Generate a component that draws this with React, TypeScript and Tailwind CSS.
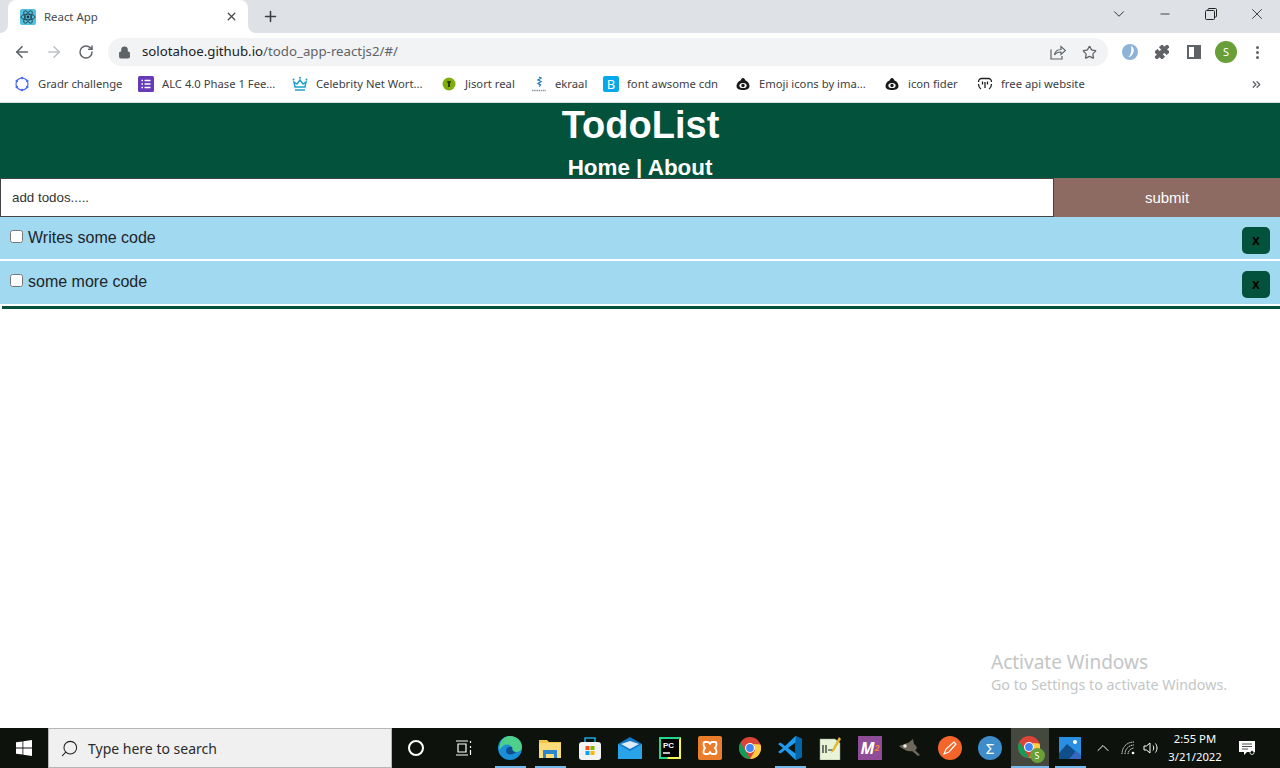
import React from 'react';
import { ArrowLeft, ArrowRight, RotateCw, Lock, Star, Puzzle, Plus, X, ChevronDown, Minus, Search, ChevronUp, ChevronsRight } from 'lucide-react';

const uiFont = { fontFamily: '"Noto Sans", "Open Sans", sans-serif' };

function ReactLogo() {
  return (
    <svg width="16" height="16" viewBox="0 0 16 16">
      <rect width="16" height="16" rx="2" fill="#53c1de" />
      <g fill="none" stroke="#1d3a44" strokeWidth="0.8">
        <ellipse cx="8" cy="8" rx="7" ry="2.8" />
        <ellipse cx="8" cy="8" rx="7" ry="2.8" transform="rotate(60 8 8)" />
        <ellipse cx="8" cy="8" rx="7" ry="2.8" transform="rotate(120 8 8)" />
      </g>
      <circle cx="8" cy="8" r="1.4" fill="#1d3a44" />
    </svg>
  );
}

function ShareIcon() {
  return (
    <svg width="16" height="16" viewBox="0 0 16 16" fill="none" stroke="#5f6368" strokeWidth="1.2">
      <path d="M1 5.5v9.5h11v-3" />
      <path d="M4.5 11c.5-3.5 3-5.5 6.5-5.5V2.500l4.500 4-4.500 4V8c-3 0-5 .8-6.500 3z" />
    </svg>
  );
}

function Bookmark({ icon, label, className }: { icon: React.ReactNode; label: string; className: string }) {
  return (
    <div className={`flex items-center ${className}`}>
      <div className="w-4 h-4 flex items-center justify-center shrink-0">{icon}</div>
      <span className="ml-2 text-[11.25px] text-[#3c4043] whitespace-nowrap">{label}</span>
    </div>
  );
}

function EyeLogo() {
  return (
    <svg width="14" height="14" viewBox="0 0 14 14">
      <path d="M7 1c1.500 0 2 1.500 2.500 2.500 2 .5 4 3 4 5.500 0 3-3 4-6.500 4S.5 12 .5 9c0-2.500 2-5 4-5.500C5 2.500 5.500 1 7 1z" fill="#1a1a1a" />
      <ellipse cx="7" cy="8.500" rx="3.600" ry="2.600" fill="#fff" />
      <circle cx="7" cy="8.500" r="1.700" fill="#1a1a1a" />
    </svg>
  );
}

function BrowserChrome() {
  return (
    <div style={uiFont} className="shrink-0">
      <div className="h-[33px] bg-[#dee1e6] flex items-end pl-2">
        <div className="relative w-[240px] h-[33px] bg-white rounded-t-lg flex items-center pl-3 pr-2">
          <div className="absolute bottom-0 -left-2 w-2 h-2 bg-white">
            <div className="w-full h-full bg-[#dee1e6] rounded-br-lg" />
          </div>
          <div className="absolute bottom-0 -right-2 w-2 h-2 bg-white">
            <div className="w-full h-full bg-[#dee1e6] rounded-bl-lg" />
          </div>
          <ReactLogo />
          <span className="ml-2 text-[11.4px] text-[#45494d]">React App</span>
          <X size={13} strokeWidth={2.4} className="ml-auto mr-[2px] text-[#45494d]" />
        </div>
        <div className="w-[44px] h-[33px] flex items-center justify-center">
          <Plus size={17} strokeWidth={2.2} className="text-[#3c4043]" />
        </div>
        <div className="ml-auto h-[33px] flex items-center text-[#222] pb-[5px]">
          <ChevronDown size={18} strokeWidth={1.2} className="mr-[30px]" />
          <Minus size={14} strokeWidth={1.4} className="mr-[33px]" />
          <svg width="12" height="12" viewBox="0 0 12 12" fill="none" stroke="#222" strokeWidth="1" className="mr-[31px]">
            <rect x="0.500" y="2.500" width="9" height="9" rx="1" fill="#dee1e6" />
            <path d="M3 2.500V1.500a1 1 0 0 1 1-1h6.500a1 1 0 0 1 1 1V8a1 1 0 0 1-1 1H9.500" />
          </svg>
          <X size={18} strokeWidth={1.1} className="mr-[14px]" />
        </div>
      </div>

      <div className="h-[33px] bg-white flex items-center pt-[5px]">
        <ArrowLeft size={18} strokeWidth={2.2} className="ml-[13px] text-[#5f6368]" />
        <ArrowRight size={18} strokeWidth={2.2} className="ml-[14px] text-[#bdc1c6]" />
        <RotateCw size={16} strokeWidth={2.2} className="ml-[15px] text-[#5f6368]" />
        <div className="ml-[14px] w-[1000px] h-[28px] rounded-full bg-[#f1f3f4] flex items-center pl-[10px] pr-[10px]">
          <Lock size={13} fill="#5f6368" strokeWidth={2} className="text-[#5f6368]" />
          <span className="ml-[11px] text-[13.25px] text-[#202124]">
            solotahoe.github.io<span className="text-[#5f6368]">/todo_app-reactjs2/#/</span>
          </span>
          <div className="ml-auto flex items-center gap-[16px]">
            <ShareIcon />
            <Star size={15} strokeWidth={2} className="text-[#5f6368] mr-[1px]" />
          </div>
        </div>
        <div className="flex items-center ml-[13px]">
          <svg width="18" height="18" viewBox="0 0 18 18">
            <circle cx="9" cy="9" r="8" fill="#8fb2d9" />
            <path d="M10 3c3 1 4 5 1 9-1 1.500-2.500 2-3.500 2 2-2 3.500-6 2.500-11z" fill="#fff" />
          </svg>
          <Puzzle size={16} fill="#5f6368" strokeWidth={1.5} className="ml-[15px] text-[#5f6368]" />
          <div className="ml-[17px] w-[14px] h-[14px] border-2 border-[#5f6368] flex justify-end">
            <div className="w-[5px] bg-[#5f6368]" />
          </div>
          <div className="ml-[14px] w-[22px] h-[22px] rounded-full bg-[#689f38] text-white text-[11px] flex items-center justify-center">S</div>
          <div className="ml-[19px] flex flex-col gap-[2px]">
            <div className="w-[3px] h-[3px] rounded-full bg-[#5f6368]" />
            <div className="w-[3px] h-[3px] rounded-full bg-[#5f6368]" />
            <div className="w-[3px] h-[3px] rounded-full bg-[#5f6368]" />
          </div>
        </div>
      </div>

      <div className="h-[37px] bg-white border-b border-[#dadce0] flex items-center">
        <Bookmark className="ml-[14px] w-[124px]" label="Gradr challenge" icon={
          <svg width="16" height="16" viewBox="0 0 16 16" fill="#4a6cf0">
            <circle cx="8" cy="8" r="6" fill="none" stroke="#4a6cf0" strokeWidth="1.2" />
            <circle cx="8" cy="2" r="1.300" />
            <circle cx="13.200" cy="5" r="1.300" />
            <circle cx="13.200" cy="11" r="1.300" />
            <circle cx="8" cy="14" r="1.300" />
            <circle cx="2.800" cy="11" r="1.300" />
            <circle cx="2.800" cy="5" r="1.300" />
          </svg>
        } />
        <Bookmark className="w-[154px]" label="ALC 4.0 Phase 1 Fee..." icon={
          <svg width="16" height="16" viewBox="0 0 16 16">
            <rect width="16" height="16" rx="1.500" fill="#673ab7" />
            <path d="M3.500 4.500h1.500M6.500 4.500h6M3.500 8h1.500M6.500 8h6M3.500 11.500h1.500M6.500 11.500h6" stroke="#fff" strokeWidth="1.300" />
          </svg>
        } />
        <Bookmark className="w-[149px]" label="Celebrity Net Wort..." icon={
          <svg width="16" height="16" viewBox="0 0 16 16" fill="none" stroke="#1f9ec9" strokeWidth="1.500">
            <path d="M2 6l3 2 3-4 3 4 3-2-1 5H3z" />
            <path d="M3 14h10" />
            <circle cx="8" cy="1.800" r="1" fill="#1f9ec9" stroke="none" />
            <circle cx="1.500" cy="3.500" r="1" fill="#1f9ec9" stroke="none" />
            <circle cx="14.500" cy="3.500" r="1" fill="#1f9ec9" stroke="none" />
          </svg>
        } />
        <Bookmark className="w-[90px]" label="Jisort real" icon={
          <svg width="16" height="16" viewBox="0 0 16 16"><circle cx="8" cy="8" r="6.500" fill="#7fae0a" /><path d="M6 5h4L9 8v3H7V8z" fill="#2a3b05" /></svg>
        } />
        <Bookmark className="w-[72px]" label="ekraal" icon={
          <svg width="16" height="16" viewBox="0 0 16 16">
            <path d="M8 1l2 1-3 2 3 1.500-3 2 2.500 1.500-1.500 1.500" fill="none" stroke="#1f78b4" strokeWidth="1.300" />
            <path d="M1 14.500h14" stroke="#8a97a8" strokeWidth="1.300" strokeDasharray="1.500 0.700" />
          </svg>
        } />
        <Bookmark className="w-[132px]" label="font awsome cdn" icon={
          <div className="w-4 h-4 rounded-[2px] bg-[#03a9e8] text-white text-[13px] leading-4 text-center">B</div>
        } />
        <Bookmark className="w-[149px]" label="Emoji icons by ima..." icon={<EyeLogo />} />
        <Bookmark className="w-[93px]" label="icon fider" icon={<EyeLogo />} />
        <Bookmark className="w-[273px]" label="free api website" icon={
          <svg width="16" height="16" viewBox="0 0 16 16" fill="none" stroke="#222" strokeWidth="1.300">
            <path d="M1.500 6c0-2 1.500-3.500 3-3.500h7c1.500 0 3 1.500 3 3.500M4 13c-1.500-1-2.500-3-2.500-5M12 13c1.500-1 2.500-3 2.500-5" />
            <path d="M5.500 5.500v3M10.500 5.500v3M8 6v6" />
          </svg>
        } />
        <ChevronsRight size={13} strokeWidth={2.4} className="text-[#5f6368]" />
      </div>
    </div>
  );
}

function TodoRow({ text }: { text: string }) {
  return (
    <div className="h-[42px] last:h-[43px] last:pb-[1px] bg-[#a0d9f0] flex items-center pl-[10px] pr-[10px]">
      <input type="checkbox" readOnly className="w-[13px] h-[13px] mb-[3px] appearance-auto" />
      <span className="ml-[5px] text-[16px] text-[#212529]">{text}</span>
      <button className="ml-auto mt-[5px] w-[28px] h-[27px] rounded-[5px] bg-[#03523b] text-black text-[14px] font-bold flex items-center justify-center">x</button>
    </div>
  );
}

function TodoPage() {
  return (
    <div className="relative flex-1 bg-white" style={{ fontFamily: '"Liberation Sans", Arial, sans-serif' }}>
      <header className="h-[75px] bg-[#03523b] text-white text-center font-bold">
        <h1 className="text-[38px] leading-[44px] pl-[1px]">TodoList</h1>
        <nav className="text-[22.4px] leading-[20px] mt-[11px]">Home | About</nav>
      </header>
      <form className="h-[39px] flex">
        <input placeholder="add todos....." className="flex-1 h-full border border-[#444] pl-[11px] text-[13.33px] outline-none placeholder:text-[#333] bg-white" />
        <button type="button" className="w-[226px] pt-[1px] bg-[#8d6a62] text-white text-[15px]">submit</button>
      </form>
      <div className="flex flex-col gap-[2px]">
        <TodoRow text="Writes some code" />
        <TodoRow text="some more code" />
      </div>
      <div className="h-[3px] bg-[#03523b] mt-[2px] ml-[2px]" />
      <div className="absolute left-[991px] top-[546px] text-[#c3c6c6]" style={uiFont}>
        <div className="text-[19px] leading-[26px]">Activate Windows</div>
        <div className="text-[14.25px] leading-[20px]">Go to Settings to activate Windows.</div>
      </div>
    </div>
  );
}

function TaskIcon({ children, bar, active }: { children: React.ReactNode; bar?: boolean; active?: boolean }) {
  return (
    <div className="relative w-[40px] h-[40px] flex items-center justify-center">
      {active && <div className="absolute inset-y-0 left-[1px] right-[1px] bg-[#45483f]" />}
      <div className="relative">{children}</div>
      {bar && <div className={`absolute bottom-0 h-[2px] bg-[#76b9ed] ${active ? 'left-[1px] right-[1px]' : 'left-[5px] right-[4px]'}`} />}
    </div>
  );
}

function ChromeLogo({ size = 22 }: { size?: number }) {
  return (
    <svg width={size} height={size} viewBox="0 0 22 22">
      <circle cx="11" cy="11" r="11" fill="#db4437" />
      <path d="M11 22A11 11 0 0 1 1.500 5.500L6.500 14l4.500 8z" fill="#0f9d58" />
      <path d="M21.500 7.500A11 11 0 0 1 11 22l5-8.500L15 7z" fill="#ffcd40" />
      <circle cx="11" cy="11" r="5" fill="#fff" />
      <circle cx="11" cy="11" r="3.900" fill="#4285f4" />
    </svg>
  );
}

function Taskbar() {
  return (
    <div style={uiFont} className="h-[40px] shrink-0 bg-[#0d130c] flex items-center">
      <div className="w-[48px] flex justify-center">
        <svg width="16" height="16" viewBox="0 0 16 16" fill="#fff">
          <path d="M0 2.300l6.500-.9v6.200H0zM7.300 1.300L16 0v7.600H7.300zM0 8.400h6.500v6.200L0 13.700zM7.300 8.400H16V16l-8.700-1.300z" />
        </svg>
      </div>
      <div className="w-[344px] h-[40px] bg-[#f0f0f0] border border-[#b5b5b5] flex items-center pl-[11px]">
        <Search size={19} strokeWidth={1.3} className="text-[#222] -scale-x-100" />
        <span className="ml-[9px] text-[14px] text-[#2b2b2b]">Type here to search</span>
      </div>
      <div className="w-[48px] flex justify-center">
        <div className="w-[16px] h-[16px] rounded-full border-2 border-white" />
      </div>
      <div className="w-[50px] flex justify-center pr-[4px]">
        <svg width="17" height="16" viewBox="0 0 17 16" fill="none" stroke="#fff" strokeWidth="1.2">
          <path d="M1 1h12M1 15h12M3 4h8v8H3zM15.500 1v2M15.500 6v2M15.500 10v5" />
        </svg>
      </div>
      <TaskIcon bar>
        <svg width="24" height="24" viewBox="0 0 24 24" className="block">
          <circle cx="12" cy="12" r="12" fill="#1a8fd8" />
          <path d="M12 0c7 0 12 5 12 11 0 3-3 5-6 5-2 0-4-1-4-3 0-4-5-6-9-3-2 1.500-3 3-3.500 5C1 6 5 0 12 0z" fill="#4fd08a" />
          <path d="M8 15c0-3 3-5 6-4 1 .5-1 5 4 5-2 3-10 4-10-1z" fill="#0c4e8f" />
        </svg>
      </TaskIcon>
      <TaskIcon bar>
        <svg width="22" height="20" viewBox="0 0 22 20" className="block">
          <path d="M0 2h8l2 2h12v16H0z" fill="#f5c544" />
          <path d="M0 5h22v15H0z" fill="#fadb7a" />
          <path d="M4 12h14v8h-3v-4H7v4H4z" fill="#2a86d1" />
        </svg>
      </TaskIcon>
      <TaskIcon>
        <svg width="24" height="24" viewBox="0 0 24 24" className="block">
          <path d="M7 6V2h10v4" fill="none" stroke="#1aa7e0" strokeWidth="1.500" />
          <rect x="1" y="6" width="22" height="18" rx="3" fill="#f3f3f3" />
          <rect x="7.500" y="10" width="4" height="4" fill="#f25022" />
          <rect x="12.500" y="10" width="4" height="4" fill="#7fba00" />
          <rect x="7.500" y="15" width="4" height="4" fill="#00a4ef" />
          <rect x="12.500" y="15" width="4" height="4" fill="#ffb900" />
        </svg>
      </TaskIcon>
      <TaskIcon>
        <svg width="24" height="22" viewBox="0 0 24 22" className="block">
          <path d="M0 7L12 0l12 7v15H0z" fill="#0f78c8" />
          <path d="M0 7l12 7 12-7v15H0z" fill="#2aa4e8" />
          <path d="M3 7l9-3 9 3-9 5z" fill="#dcecf8" />
        </svg>
      </TaskIcon>
      <TaskIcon>
        <svg width="22" height="22" viewBox="0 0 22 22" className="block">
          <rect width="22" height="22" fill="#21d789" />
          <path d="M22 0v22H8z" fill="#fcf84a" />
          <rect x="2" y="2" width="18" height="18" fill="#000" />
          <path d="M4 16h7" stroke="#fff" strokeWidth="1.500" />
          <text x="4" y="11" fontSize="8" fontWeight="700" fill="#fff" fontFamily="Liberation Sans">PC</text>
        </svg>
      </TaskIcon>
      <TaskIcon>
        <svg width="24" height="24" viewBox="0 0 24 24" className="block">
          <rect width="24" height="24" rx="2" fill="#ea7d2c" />
          <path d="M7 6h3c1.500 0 1.500 2 2 2s.5-2 2-2h3c2 0 2 4 0 6 2 2 2 6 0 6h-3c-1.500 0-1.500-2-2-2s-.5 2-2 2H7c-2 0-2-4 0-6-2-2-2-6 0-6z" fill="none" stroke="#fff" strokeWidth="1.800" />
        </svg>
      </TaskIcon>
      <TaskIcon><ChromeLogo /></TaskIcon>
      <TaskIcon bar>
        <svg width="24" height="24" viewBox="0 0 24 24" className="block">
          <path d="M17.500 0L24 3v18l-6.500 3L7 14l-4.500 3.500L0 16l5-4-5-4 2.500-1.500L7 10z" fill="#1f9cf0" />
          <path d="M17.500 6.500L10 12l7.500 5.500z" fill="#0d1510" />
          <path d="M17.500 0L24 3v18l-6.500 3z" fill="#0065a9" />
        </svg>
      </TaskIcon>
      <TaskIcon>
        <svg width="22" height="24" viewBox="0 0 22 24" className="block">
          <path d="M1 3h15l5 4v17H1z" fill="#e8f3d8" stroke="#9aa58c" strokeWidth="0.500" />
          <path d="M4 9v8M7 9v8M9 14h5" stroke="#222" strokeWidth="1.200" />
          <path d="M20 1l2 2-7 12-3 2 1-3z" fill="#e5b82c" />
        </svg>
      </TaskIcon>
      <TaskIcon>
        <div className="w-[24px] h-[24px] bg-[#8e4d96] text-white text-[16px] font-bold italic leading-[24px] text-center">M<span className="text-[#f08a24] text-[9px] align-top">2</span></div>
      </TaskIcon>
      <TaskIcon>
        <svg width="24" height="20" viewBox="0 0 24 20" className="block">
          <path d="M1 8c4-1 7-3 9-3l5-4 1 5c3 2 4 5 1 6l5 5-2 1-6-5c-4 1-8-1-13-5z" fill="#6d675c" />
          <circle cx="7" cy="8" r="1.800" fill="#eee" />
        </svg>
      </TaskIcon>
      <TaskIcon>
        <svg width="24" height="24" viewBox="0 0 24 24" className="block">
          <circle cx="12" cy="12" r="12" fill="#f4652c" />
          <path d="M6 18l2-5 8-7 2 2-7 8z" fill="none" stroke="#fff" strokeWidth="1.200" />
        </svg>
      </TaskIcon>
      <TaskIcon>
        <div className="w-[24px] h-[24px] rounded-full bg-[#3f8ccb] text-white text-[15px] leading-[24px] text-center">Σ</div>
      </TaskIcon>
      <TaskIcon bar active>
        <div className="relative w-[24px] h-[24px] -ml-[1px]">
          <ChromeLogo size={22} />
          <div className="absolute -right-[3px] -bottom-[3px] w-[15px] h-[15px] rounded-full bg-[#689f38] text-white text-[9px] leading-[15px] text-center">S</div>
        </div>
      </TaskIcon>
      <TaskIcon bar>
        <svg width="22" height="22" viewBox="0 0 22 22" className="block">
          <rect width="22" height="22" fill="#2a8fe0" />
          <path d="M0 22V16l8-9 14 12v3z" fill="#0f4f8c" />
          <path d="M10 22l7-8 5 4v4z" fill="#3568c0" />
          <circle cx="16" cy="5" r="2" fill="#fff" />
        </svg>
      </TaskIcon>
      <div className="ml-auto flex items-center text-white mr-[12px]">
        <ChevronUp size={20} strokeWidth={1.2} />
        <svg width="16" height="14" viewBox="0 0 16 14" fill="none" stroke="#ddd" strokeWidth="1" className="ml-[8px]">
          <path d="M1 13C1 6 6 1 13 1M4 13c0-5 4-9 9-9M7 13c0-3 3-6 6-6" strokeDasharray="1.500 0.700" />
          <circle cx="12" cy="12" r="1.300" fill="#fff" stroke="none" />
        </svg>
        <svg width="16" height="14" viewBox="0 0 16 14" fill="none" stroke="#fff" strokeWidth="1" className="ml-[6px]">
          <path d="M1 5v4h2.500L7 12V2L3.500 5zM10 4.500c1 1.500 1 3.500 0 5M12.500 2.500c2 3 2 6 0 9" />
        </svg>
        <div className="w-[62px] text-center text-[11.25px] leading-[18px] text-white ml-[5px]">
          <div>2:55 PM</div>
          <div>3/21/2022</div>
        </div>
        <div className="w-[42px] flex justify-center">
          <svg width="16" height="16" viewBox="0 0 16 16" fill="#fff">
            <path d="M0 1h16v11H8l-3 3v-3H0z" />
            <path d="M3 4h10M3 6.500h10M3 9h6" stroke="#222" strokeWidth="0.800" />
            <circle cx="13" cy="12.500" r="2" fill="#0d130c" stroke="#fff" strokeWidth="0.800" />
          </svg>
        </div>
      </div>
    </div>
  );
}

export default function App() {
  return (
    <div className="h-screen w-full overflow-hidden flex flex-col bg-white">
      <BrowserChrome />
      <TodoPage />
      <Taskbar />
    </div>
  );
}
